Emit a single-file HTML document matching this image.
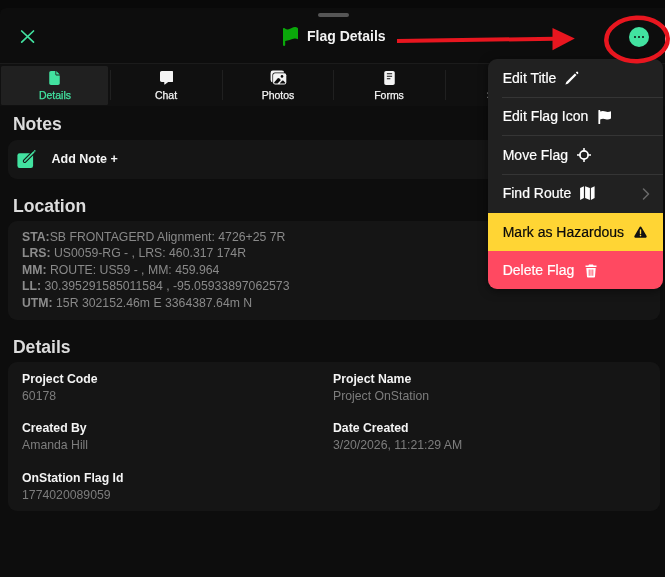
<!DOCTYPE html>
<html lang="en">
<head>
<meta charset="utf-8">
<title>Flag Details</title>
<style>
*{box-sizing:border-box;margin:0;padding:0}
html,body{width:670px;height:577px;overflow:hidden;background:#fff}
body{font-family:"Liberation Sans",Arial,sans-serif;color:#fff;position:relative}
#app{will-change:transform;position:absolute;left:0;top:0;width:665px;height:577px;background:#090909;overflow:hidden}
#panel{position:absolute;left:0;top:8px;width:700px;height:569px;background:#0d0d0d;border-radius:6px 6px 0 0}
#handle{position:absolute;left:317.500px;top:12.500px;width:31.500px;height:4.300px;border-radius:2.200px;background:#555}
#close{position:absolute;left:20px;top:29px;width:15px;height:15px}
#title{position:absolute;left:307px;top:27px;font-size:14px;font-weight:bold;line-height:18px;white-space:nowrap;color:#f2f2f2}
#tflag{position:absolute;left:282px;top:26px;width:17px;height:20px}
#more{position:absolute;left:628.800px;top:26.500px;width:20.400px;height:20.400px;border-radius:50%;background:#42e2a0}
#more i{position:absolute;top:9px;width:2.400px;height:2.400px;border-radius:50%;background:#0d0d0d}
#tabline{position:absolute;left:0;top:63px;width:665px;height:43px;background:#101010;border-top:1px solid #1b1b1b}
.tab{position:absolute;top:66px;height:39px;width:108px;text-align:center;font-size:10.500px;-webkit-text-stroke:0.250px currentColor;color:#f4f4f4;border-radius:2px}
.tab.on{background:#202020;color:#42e2a0}
.tab span{position:absolute;left:0;right:0;top:23px;line-height:13px}
.tab svg{position:absolute;top:5px;left:50%}
.sep{position:absolute;top:70px;width:1px;height:30px;background:#202020}
h2{position:absolute;left:12.900px;font-size:17.600px;line-height:20px;font-weight:bold;color:#dcdcdc;white-space:nowrap}
.card{position:absolute;left:8px;width:652px;background:#151515;border-radius:9px}
#addnote{position:absolute;left:51.500px;top:152px;font-size:12.5px;line-height:14px;font-weight:bold;color:#f4f4f4;white-space:nowrap}
.loc{position:absolute;left:22px;font-size:12.250px;line-height:14px;color:#898989;white-space:nowrap}
.loc b{color:#8c8c8c}
.lb{position:absolute;font-size:12.250px;line-height:14px;font-weight:bold;color:#f4f4f4;white-space:nowrap}
.vl{position:absolute;font-size:12.250px;line-height:14px;color:#7d7d7d;white-space:nowrap}
#pop{position:absolute;left:488px;top:59.400px;width:175px;height:229.900px;background:#212121;border-radius:9px;overflow:hidden;box-shadow:0 2px 10px rgba(0,0,0,.5)}
.it{position:absolute;left:0;width:175px;height:38.4px;font-size:14px;color:#fff}
.it span{-webkit-text-stroke:0.200px currentColor;position:absolute;left:14.700px;top:9.600px;line-height:18px;white-space:nowrap}
.ln{position:absolute;left:14px;right:0;height:1px;background:#353535}
.it svg{position:absolute}
#anno{position:absolute;left:0;top:0;width:670px;height:577px;pointer-events:none}
</style>
</head>
<body>
<div id="app">
<div id="panel"></div>
<div id="handle"></div>

<svg id="close" viewBox="0 0 15 15"><path d="M1.700 2L13.500 13.200M13.500 2L1.700 13.200" stroke="#42e2a0" stroke-width="1.700" stroke-linecap="round" fill="none"/></svg>

<svg id="tflag" viewBox="0 0 17 20"><rect x="1" y="2.300" width="2.200" height="17.600" rx="0.800" fill="#0aa80a"/><path d="M1 2.300C3 2.300 4 3.700 6 3.400C9 2.900 11 0.700 13.500 1C14.800 1.200 15.500 2 16 2.300V13.200C14.500 12.400 13 12.200 11.500 12.700C9 13.500 6.500 14.300 3.200 14.900L1 14.900Z" fill="#0aa80a"/></svg>
<div id="title">Flag Details</div>
<div id="more"><i style="left:4.800px"></i><i style="left:9px"></i><i style="left:13.200px"></i></div>

<div id="tabline"></div>
<div class="tab on" style="left:0.500px;width:107.500px;border-radius:1.500px"><svg width="11" height="14" viewBox="0 0 384 512" style="margin-left:-5px"><path fill="#42e2a0" d="M0 64C0 28.700 28.700 0 64 0H224V128c0 17.700 14.300 32 32 32H384V448c0 35.300-28.700 64-64 64H64c-35.300 0-64-28.700-64-64V64zm384 64H256V0L384 128z"/></svg><span style="left:1.400px">Details</span></div>
<div class="sep" style="left:110px"></div>
<div class="tab" style="left:112px"><svg width="13.600" height="13.600" viewBox="0 0 512 512" style="margin-left:-6.500px"><path fill="#f4f4f4" d="M64 0C28.700 0 0 28.700 0 64V352c0 35.300 28.700 64 64 64h96v80c0 6.100 3.400 11.600 8.800 14.300s11.900 2.100 16.800-1.500L309.300 416H448c35.300 0 64-28.700 64-64V64c0-35.300-28.700-64-64-64H64z"/></svg><span>Chat</span></div>
<div class="sep" style="left:222px"></div>
<div class="tab" style="left:224px"><svg width="17" height="16" viewBox="0 0 17 16" style="margin-left:-8.500px;top:4px"><rect x="0.600" y="0.600" width="13.600" height="11.800" rx="2.300" fill="#f4f4f4"/><rect x="2.400" y="2.500" width="14.600" height="12.800" rx="2.600" fill="#0d0d0d"/><rect x="3.100" y="3.200" width="13.200" height="11.400" rx="2" fill="#f4f4f4"/><circle cx="12" cy="6.400" r="1.300" fill="#0d0d0d"/><path d="M4.300 12.300L7.600 8.500Q8.500 7.700 9.400 8.500L10.900 10L7.600 13.600H5Q4 13.500 4.300 12.300Z" fill="#0d0d0d"/><path d="M9.600 13.600L12.100 10.700Q12.800 10.100 13.500 10.700L15.300 12.700Q15.500 13.600 14.600 13.600Z" fill="#0d0d0d"/></svg><span>Photos</span></div>
<div class="sep" style="left:333px"></div>
<div class="tab" style="left:335px"><svg width="11" height="14" viewBox="0 0 384 512" style="margin-left:-5.400px;top:4.700px"><path fill="#f4f4f4" d="M64 0C28.700 0 0 28.700 0 64V448c0 35.300 28.700 64 64 64H320c35.300 0 64-28.700 64-64V64c0-35.300-28.700-64-64-64H64zM96 84H288v32H96zM96 176H288v32H96zM96 268H224v32H96z" fill-rule="evenodd"/></svg><span>Forms</span></div>
<div class="sep" style="left:444.500px"></div>
<div class="tab" style="left:447px"><span>Share</span></div>

<h2 style="top:113.600px">Notes</h2>
<div class="card" style="top:140px;height:39px"></div>
<svg style="position:absolute;left:17px;top:149px" width="20" height="20" viewBox="0 0 20 20"><rect x="0.400" y="4.200" width="15.700" height="14.800" rx="2.200" fill="#42e2a0"/><path d="M7.700 12.100L16.900 2.900" stroke="#151515" stroke-width="3.800" stroke-linecap="round"/><path d="M7.700 12.100L16.700 3.100" stroke="#42e2a0" stroke-width="1.500" stroke-linecap="round"/><circle cx="17.800" cy="1.900" r="0.800" fill="#42e2a0"/></svg>
<div id="addnote">Add Note +</div>

<h2 style="top:195.800px">Location</h2>
<div class="card" style="top:221px;height:99px"></div>
<div class="loc" style="top:230px"><b>STA:</b>SB FRONTAGERD Alignment: 4726+25 7R</div>
<div class="loc" style="top:246.4px"><b>LRS:</b> US0059-RG - , LRS: 460.317 174R</div>
<div class="loc" style="top:262.8px"><b>MM:</b> ROUTE: US59 - , MM: 459.964</div>
<div class="loc" style="top:279.2px"><b>LL:</b> 30.395291585011584 , -95.05933897062573</div>
<div class="loc" style="top:295.6px"><b>UTM:</b> 15R 302152.46m E 3364387.64m N</div>

<h2 style="top:337.400px">Details</h2>
<div class="card" style="top:362px;height:149px"></div>
<div class="lb" style="left:22px;top:372px">Project Code</div>
<div class="vl" style="left:22px;top:388.5px">60178</div>
<div class="lb" style="left:333px;top:372px">Project Name</div>
<div class="vl" style="left:333px;top:388.5px">Project OnStation</div>
<div class="lb" style="left:22px;top:421px">Created By</div>
<div class="vl" style="left:22px;top:437.5px">Amanda Hill</div>
<div class="lb" style="left:333px;top:421px">Date Created</div>
<div class="vl" style="left:333px;top:437.5px">3/20/2026, 11:21:29 AM</div>
<div class="lb" style="left:22px;top:470.500px">OnStation Flag Id</div>
<div class="vl" style="left:22px;top:487.500px">1774020089059</div>

<div id="pop">
  <div class="it" style="top:0;height:38px"><span>Edit Title</span>
    <svg style="left:75.200px;top:9.800px" width="18" height="18" viewBox="0 0 18 18"><path d="M2.400 15.600L3.300 13.100L11.900 4.500L13.500 6.100L4.900 14.700Z" fill="#fff"/><path d="M12.800 3.600L13.600 2.800Q14.100 2.400 14.600 2.800L15.200 3.400Q15.600 3.900 15.200 4.400L14.400 5.200Z" fill="#fff"/></svg></div>
  <div class="ln" style="top:37.600px"></div>
  <div class="it" style="top:38.200px"><span>Edit Flag Icon</span>
    <svg style="left:110px;top:12px" width="14" height="14" viewBox="0 0 14 14"><path d="M1.300 0.800V13.400" stroke="#fff" stroke-width="1.800" stroke-linecap="round"/><path d="M2 1.600C4.400 0.600 6 1 7.600 1.600C9.200 2.200 10.800 2.200 13 1.200V8.600C10.800 9.800 9.200 9.800 7.600 9.200C6 8.600 4.400 8.400 2 9.400Z" fill="#fff"/></svg></div>
  <div class="ln" style="top:75.700px"></div>
  <div class="it" style="top:76.400px"><span style="top:10.100px">Move Flag</span>
    <svg style="left:89px;top:12.200px" width="14" height="14" viewBox="0 0 14 14"><circle cx="7" cy="7" r="4.100" fill="none" stroke="#fff" stroke-width="1.700"/><path d="M7 0.500V3M7 11V13.500M0.500 7H3M11 7H13.500" stroke="#fff" stroke-width="1.600" stroke-linecap="round"/></svg></div>
  <div class="ln" style="top:114.400px"></div>
  <div class="it" style="top:114.600px"><span style="top:9.900px">Find Route</span>
    <svg style="left:91px;top:12.500px" width="16" height="14" viewBox="0 0 16 14"><path d="M1.100 2L4.900 0.200V12.100L1.100 13.900Z M6.100 0.200L10.900 2V13.900L6.100 12.100Z M11.900 2L15.600 0.200V12.100L11.900 13.900Z" fill="#fff"/></svg>
    <svg style="left:154px;top:13.700px" width="8" height="12" viewBox="0 0 8 12"><path d="M1.500 1L6.500 6L1.500 11" stroke="#6a6a6a" stroke-width="1.500" fill="none" stroke-linecap="round" stroke-linejoin="round"/></svg></div>
  <div class="it" style="top:153.300px;height:38.400px;background:#ffd534;color:#0a0a0a"><span style="top:9.900px">Mark as Hazardous</span>
    <svg style="left:145.600px;top:13px" width="13" height="12" viewBox="0 0 14 13"><path d="M7 0.600C7.500 0.600 7.900 0.900 8.100 1.300L13.600 10.900C14 11.700 13.500 12.600 12.600 12.600H1.400C0.500 12.600 0 11.700 0.400 10.900L5.900 1.300C6.100 0.900 6.500 0.600 7 0.600Z" fill="#111"/><path d="M7 4.200V8.200" stroke="#ffd534" stroke-width="1.500" stroke-linecap="round"/><circle cx="7" cy="10.400" r="0.900" fill="#ffd534"/></svg></div>
  <div class="it" style="top:191.500px;height:38.500px;background:#ff4961;color:#fff"><span style="top:10.300px">Delete Flag</span>
    <svg style="left:96.800px;top:13px" width="12" height="14" viewBox="0 0 12 14"><path d="M4 0.500H8L8.600 1.600H11.500V3H0.500V1.600H3.400Z" fill="#fff"/><path d="M1.300 4H10.700L10 12.600C9.950 13.200 9.500 13.600 8.900 13.600H3.100C2.500 13.600 2.050 13.200 2 12.600Z" fill="#fff"/><path d="M4.200 5.500V11.800M6 5.500V11.800M7.800 5.500V11.800" stroke="#ff4961" stroke-width="0.900"/></svg></div>
</div>
</div>

<svg id="anno" viewBox="0 0 670 577">
  <path d="M397 41L555 38.700" stroke="#e8161f" stroke-width="4" fill="none"/>
  <path d="M552.500 28L574.800 38.600L552.500 50.200Z" fill="#e8161f"/>
  <ellipse cx="637" cy="39.500" rx="30.700" ry="21.700" fill="none" stroke="#e8161f" stroke-width="4.500" transform="rotate(-2 637 39.500)"/>
</svg>
</body>
</html>
